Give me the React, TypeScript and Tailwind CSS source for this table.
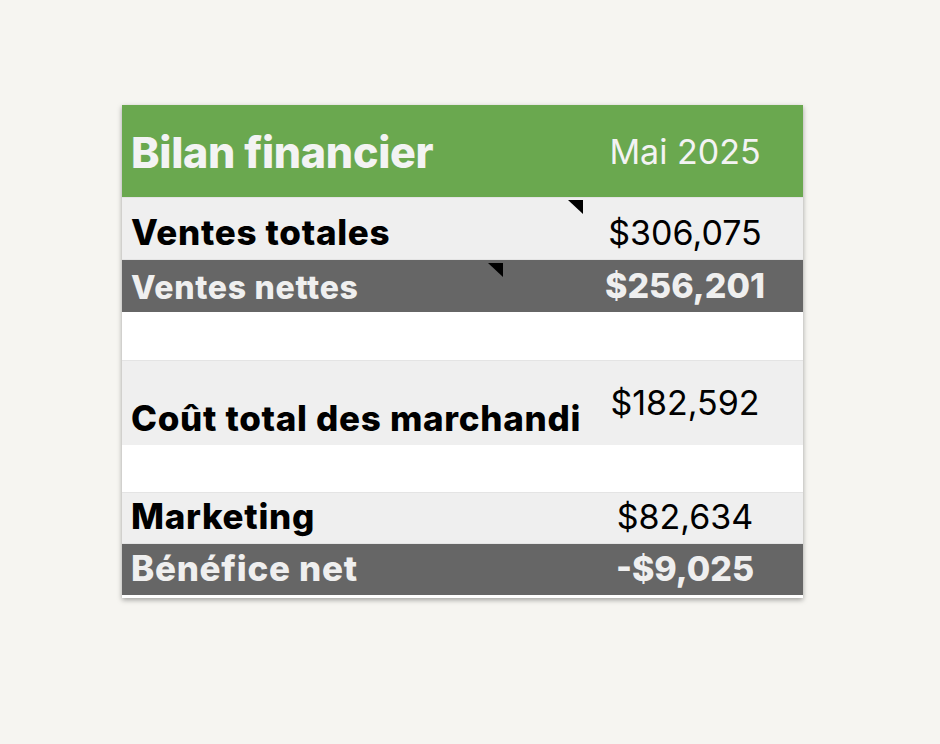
import React from 'react';

type Row = {
  label: string;
  value?: string;
  tone: 'light' | 'dark' | 'blank' | 'tall';
  height: string;
  size?: string;
  marker?: string;
};

const rows: Row[] = [
  { label: 'Ventes totales', value: '$306,075', tone: 'light', height: 'h-[62px]', marker: 'left-[446px] top-[2px]' },
  { label: 'Ventes nettes', value: '$256,201', tone: 'dark', height: 'h-[53px]', size: 'text-[32px] pb-[4px]', marker: 'left-[366px] top-[3px]' },
  { label: '', tone: 'blank', height: 'h-[48px]' },
  // the sheet cell clips the long label at the column edge
  { label: 'Coût total des marchandi', value: '$182,592', tone: 'tall', height: 'h-[85px]' },
  { label: '', tone: 'blank', height: 'h-[47px]' },
  { label: 'Marketing', value: '$82,634', tone: 'light', height: 'h-[51px]' },
  { label: 'Bénéfice net', value: '-$9,025', tone: 'dark', height: 'h-[52px]' },
];

function Marker({ pos }: { pos: string }) {
  return (
    <svg className={`absolute ${pos}`} width="15" height="14" viewBox="0 0 15 14">
      <polygon points="0,0 15,0 15,14" fill="#000" />
    </svg>
  );
}

export default function App() {
  return (
    <div
      className="min-h-screen bg-[#f6f5f1] pt-[105px] pl-[122px]"
      style={{ fontFamily: 'Inter, "Noto Sans", sans-serif' }}
    >
      <div className="w-[681px] bg-white shadow-[0_2px_5px_rgba(0,0,0,0.35)]">
        <div className="flex h-[92px] bg-[#6aa84f] text-[#f3f3f3]">
          <div className="w-[461px] flex items-center pl-[9px] pt-[2px] text-[43px] font-extrabold tracking-[-0.3px]">
            Bilan financier
          </div>
          <div className="flex-1 flex items-center justify-center pr-[16px] text-[34px]">
            Mai 2025
          </div>
        </div>

        {rows.map((row, i) => {
          if (row.tone === 'blank') {
            return <div key={i} className={`${row.height} bg-white`} />;
          }
          const dark = row.tone === 'dark';
          return (
            <div
              key={i}
              className={`relative flex ${row.height} border-t border-[#e4e4e4] ${
                dark ? 'bg-[#666666] text-[#efefef]' : 'bg-[#efefef] text-black'
              }`}
            >
              <div
                className={`w-[461px] overflow-hidden whitespace-nowrap flex items-end pl-[9px] ${
                  row.size ?? 'text-[35px] pb-[7px]'
                } leading-[40px] font-extrabold tracking-[0.7px]`}
              >
                {row.label}
              </div>
              <div
                className={`flex-1 flex justify-center pr-[16px] text-[34px] leading-[40px] ${
                  row.tone === 'tall' ? 'items-start pt-[22px]' : 'items-end pb-[6px]'
                } ${dark ? 'font-extrabold' : ''}`}
              >
                {row.value}
              </div>
              {row.marker && <Marker pos={row.marker} />}
            </div>
          );
        })}
        <div className="h-[3px] bg-white" />
      </div>
    </div>
  );
}
